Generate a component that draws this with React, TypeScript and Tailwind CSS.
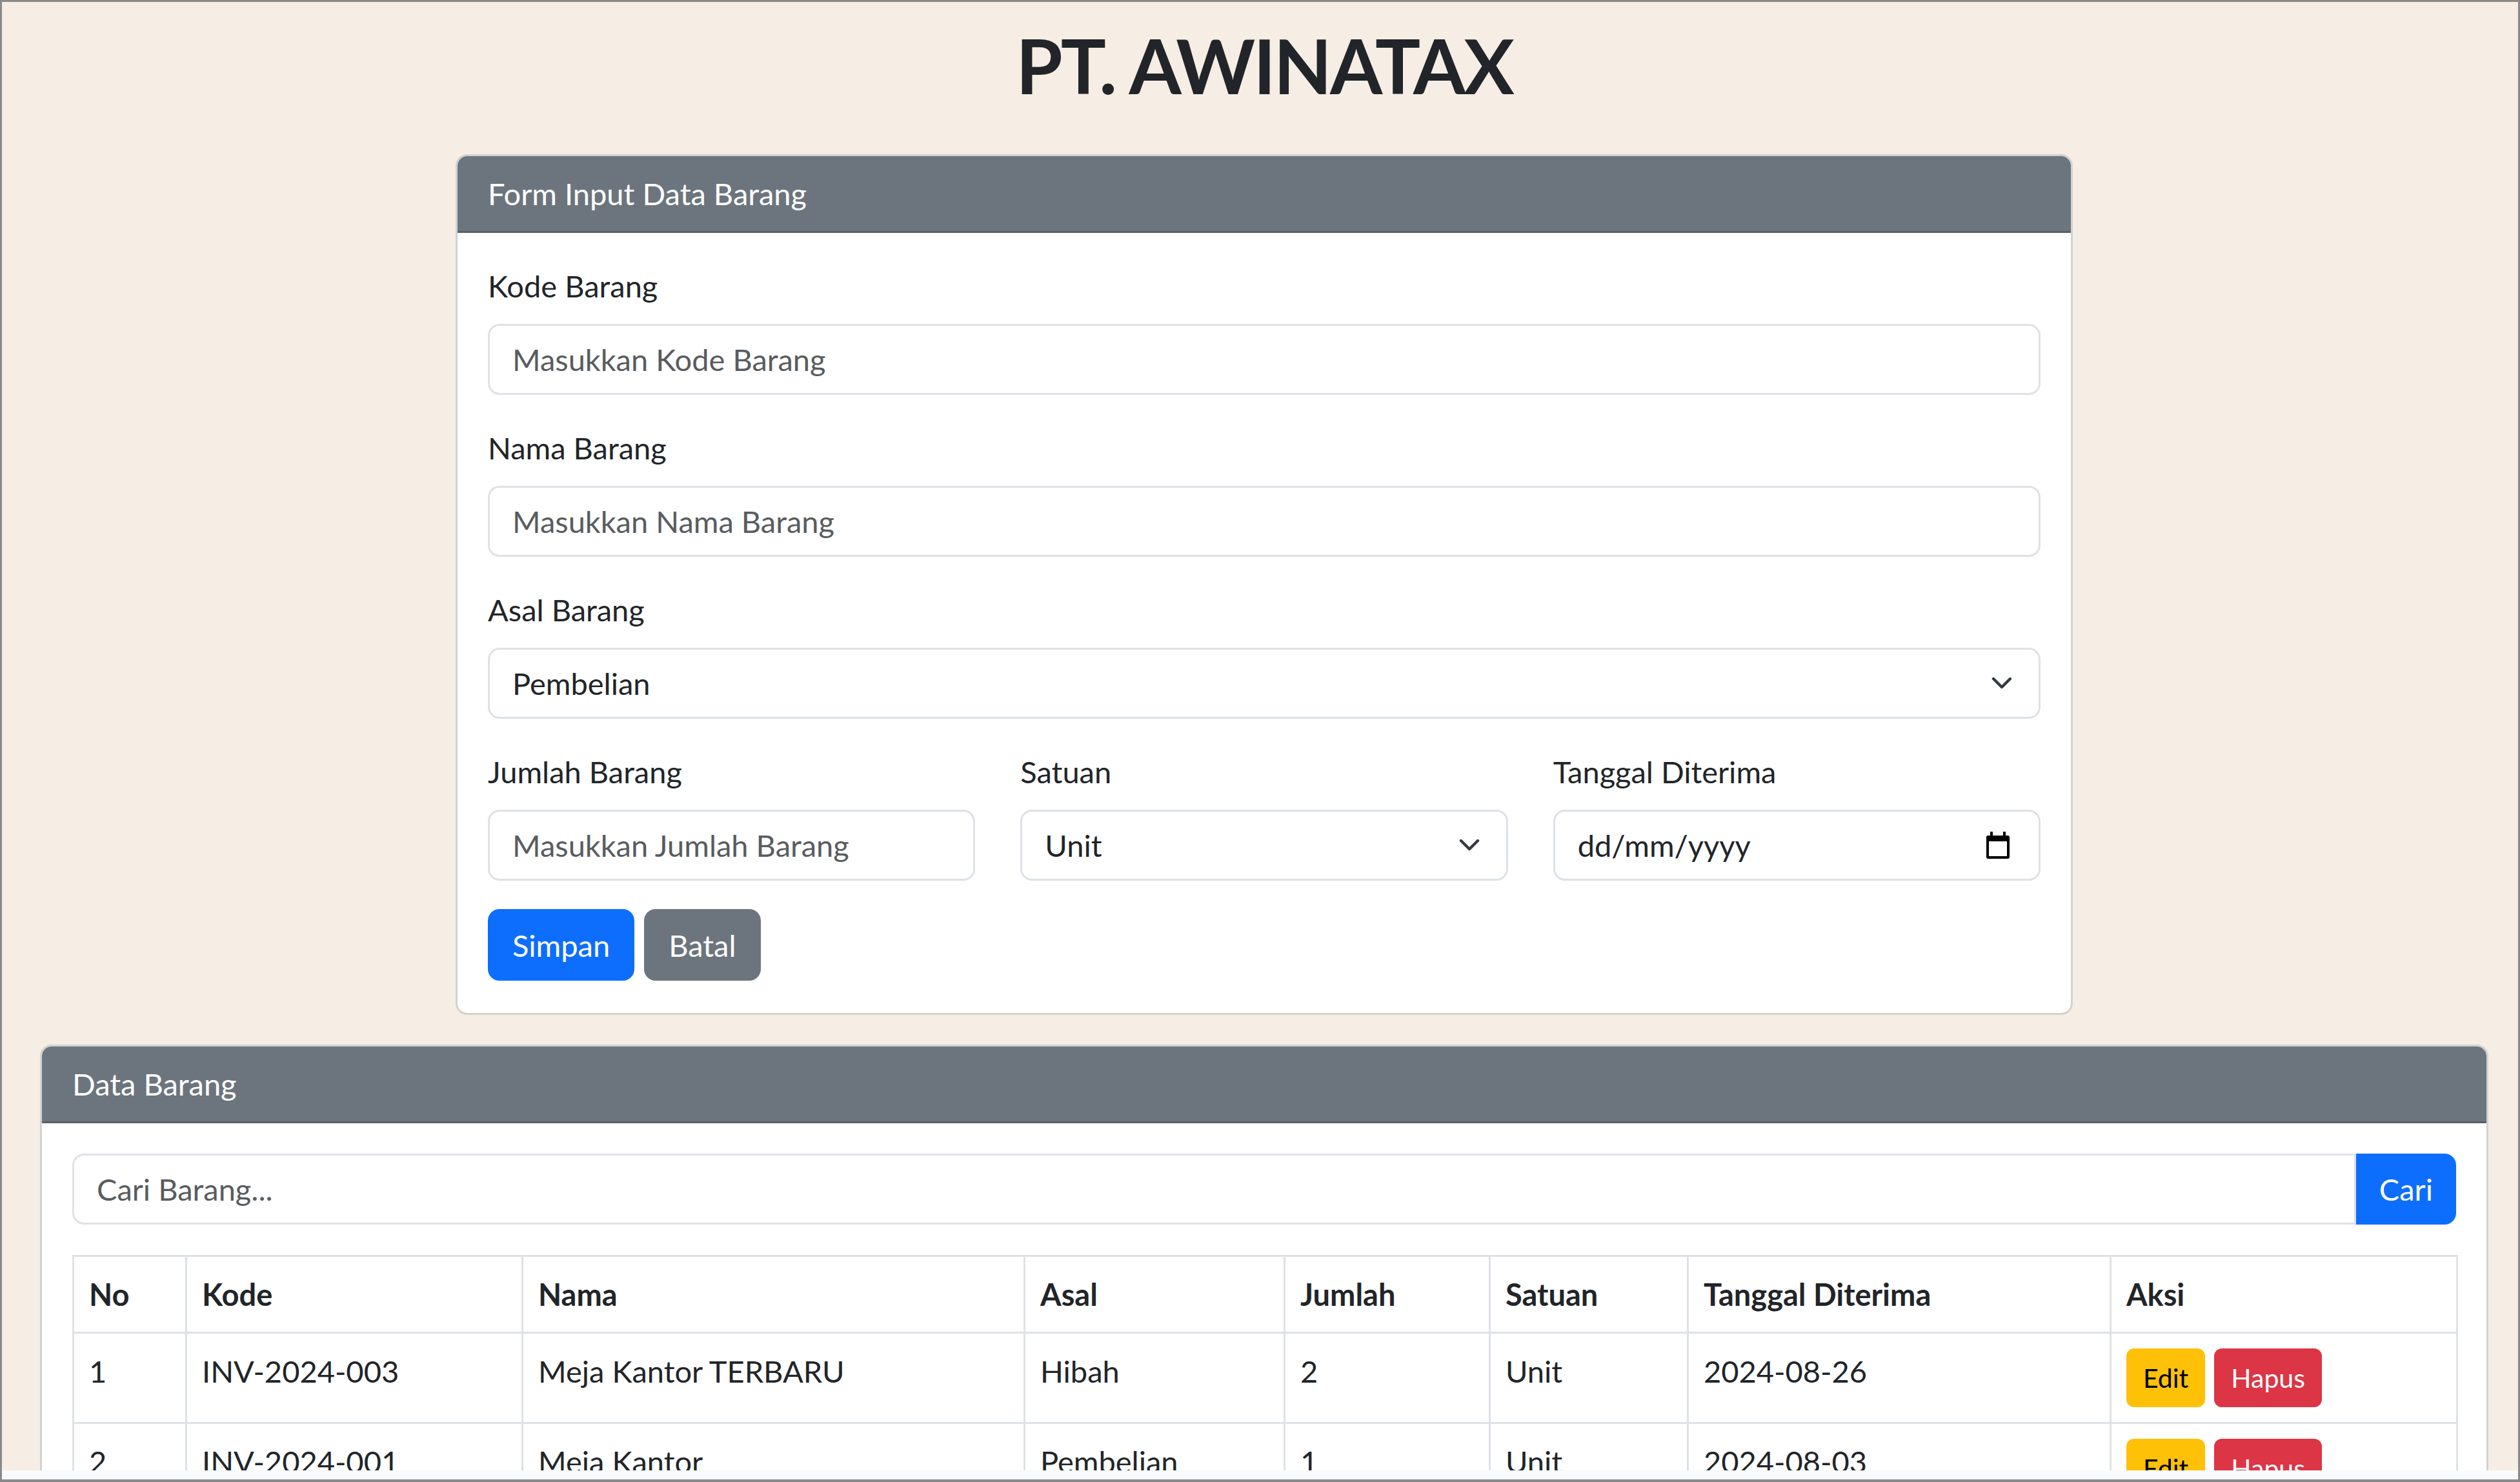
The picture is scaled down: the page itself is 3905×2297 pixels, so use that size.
const rows = [
  { no: 1, kode: "INV-2024-003", nama: "Meja Kantor TERBARU", asal: "Hibah", jumlah: 2, satuan: "Unit", tanggal: "2024-08-26" },
  { no: 2, kode: "INV-2024-001", nama: "Meja Kantor", asal: "Pembelian", jumlah: 1, satuan: "Unit", tanggal: "2024-08-03" },
];

const cols = [
  { label: "No", w: "w-[175px]" },
  { label: "Kode", w: "w-[521px]" },
  { label: "Nama", w: "w-[778px]" },
  { label: "Asal", w: "w-[403px]" },
  { label: "Jumlah", w: "w-[318px]" },
  { label: "Satuan", w: "w-[307px]" },
  { label: "Tanggal Diterima", w: "w-[655px]" },
  { label: "Aksi", w: "w-[537px]" },
];

const inputCls =
  "w-full h-[110px] px-[35px] bg-white border-[3px] border-[#dee2e6] rounded-[18px] text-[47px] text-[#212529] placeholder:text-[#595c5f] outline-none";

const Chevron = () => (
  <svg
    className="pointer-events-none absolute right-[44px] top-1/2 -translate-y-1/2"
    width="32"
    height="20"
    viewBox="0 0 32 20"
    fill="none"
  >
    <path d="M3 3 L16 16 L29 3" stroke="#343a40" strokeWidth="4.4" strokeLinecap="round" strokeLinejoin="round" />
  </svg>
);

const CalendarIcon = () => (
  <svg width="38" height="42" viewBox="0 0 38 42">
    <rect x="7" y="0" width="4" height="9" fill="#000" />
    <rect x="27" y="0" width="4" height="9" fill="#000" />
    <rect x="1" y="6" width="36" height="36" rx="3" fill="#000" />
    <rect x="5" y="15" width="28" height="23" fill="#fff" />
  </svg>
);

const Field = ({ label, children }: { label: string; children: React.ReactNode }) => (
  <div>
    <label className="block mb-[24px]">{label}</label>
    {children}
  </div>
);

const Select = ({ options }: { options: string[] }) => (
  <div className="relative">
    <select className={`${inputCls} appearance-none`} defaultValue={options[0]}>
      {options.map((o) => (
        <option key={o}>{o}</option>
      ))}
    </select>
    <Chevron />
  </div>
);

export default function App() {
  return (
    <div className="w-[3905px] h-[2297px] flex flex-col border-[#8a8a8a] border-t-[3px] border-x-[3px] border-b-[4px] font-[Lato,sans-serif] text-[47px] leading-[70px] text-[#212529]">
      <main className="flex-1 min-h-0 overflow-hidden bg-[#f6ede4]">
        <div className="ml-[703px] w-[2506px]">
          <h1 className="mt-[28px] text-center text-[117px] leading-[140px] font-bold tracking-[-3px]">PT. AWINATAX</h1>

          {/* form card */}
          <div className="mt-[68px] bg-white border-[3px] border-[rgba(0,0,0,0.175)] rounded-[18px] overflow-hidden">
            <div className="bg-[#6c757d] text-white px-[47px] py-[23px] border-b-[3px] border-[rgba(0,0,0,0.175)]">
              Form Input Data Barang
            </div>
            <div className="p-[47px] pb-[50px]">
              <div className="flex flex-col gap-[47px]">
                <Field label="Kode Barang">
                  <input className={inputCls} placeholder="Masukkan Kode Barang" />
                </Field>
                <Field label="Nama Barang">
                  <input className={inputCls} placeholder="Masukkan Nama Barang" />
                </Field>
                <Field label="Asal Barang">
                  <Select options={["Pembelian", "Hibah"]} />
                </Field>
                <div className="grid grid-cols-3 gap-x-[70px]">
                  <Field label="Jumlah Barang">
                    <input className={inputCls} placeholder="Masukkan Jumlah Barang" />
                  </Field>
                  <Field label="Satuan">
                    <Select options={["Unit", "Pcs", "Set"]} />
                  </Field>
                  <Field label="Tanggal Diterima">
                    <div className="h-[110px] px-[35px] pr-[44px] border-[3px] border-[#dee2e6] rounded-[18px] flex items-center justify-between">
                      <span>dd/mm/yyyy</span>
                      <CalendarIcon />
                    </div>
                  </Field>
                </div>
              </div>
              <div className="mt-[44px] flex gap-[15px]">
                <button className="h-[111px] px-[38px] rounded-[18px] bg-[#0d6efd] text-white">Simpan</button>
                <button className="h-[111px] px-[38px] rounded-[18px] bg-[#6c757d] text-white">Batal</button>
              </div>
            </div>
          </div>
        </div>

        {/* data card */}
        <div className="mt-[46px] ml-[59px] w-[3794px] bg-white border-[3px] border-[rgba(0,0,0,0.175)] rounded-[18px] overflow-hidden">
          <div className="bg-[#6c757d] text-white px-[47px] py-[23px] border-b-[3px] border-[rgba(0,0,0,0.175)]">
            Data Barang
          </div>
          <div className="p-[47px]">
            <div className="flex mb-[47px]">
              <input
                className="flex-1 h-[110px] px-[35px] border-[3px] border-[#dee2e6] rounded-l-[18px] text-[47px] placeholder:text-[#595c5f] outline-none"
                placeholder="Cari Barang..."
              />
              <button className="h-[110px] px-[36px] bg-[#0d6efd] text-white rounded-r-[18px]">Cari</button>
            </div>
            <table className="w-full table-fixed border-collapse">
              <thead>
                <tr>
                  {cols.map((c) => (
                    <th key={c.label} className={`${c.w} text-left font-bold align-top px-[23px] py-[23px] border-[3px] border-[#dee2e6]`}>
                      {c.label}
                    </th>
                  ))}
                </tr>
              </thead>
              <tbody>
                {rows.map((r) => (
                  <tr key={r.no}>
                    {[r.no, r.kode, r.nama, r.asal, r.jumlah, r.satuan, r.tanggal].map((v, i) => (
                      <td key={i} className="align-top px-[23px] py-[23px] border-[3px] border-[#dee2e6]">
                        {v}
                      </td>
                    ))}
                    <td className="align-top px-[23px] py-[23px] border-[3px] border-[#dee2e6]">
                      <div className="flex gap-[14px] text-[41px] leading-[61px]">
                        <button className="px-[23px] py-[12px] border-[3px] border-[#ffc107] bg-[#ffc107] text-black rounded-[12px]">Edit</button>
                        <button className="px-[23px] py-[12px] border-[3px] border-[#dc3545] bg-[#dc3545] text-white rounded-[12px]">Hapus</button>
                      </div>
                    </td>
                  </tr>
                ))}
              </tbody>
            </table>
          </div>
        </div>
      </main>
      <div className="h-[14px] bg-[#f7fbfb]" />
    </div>
  );
}
